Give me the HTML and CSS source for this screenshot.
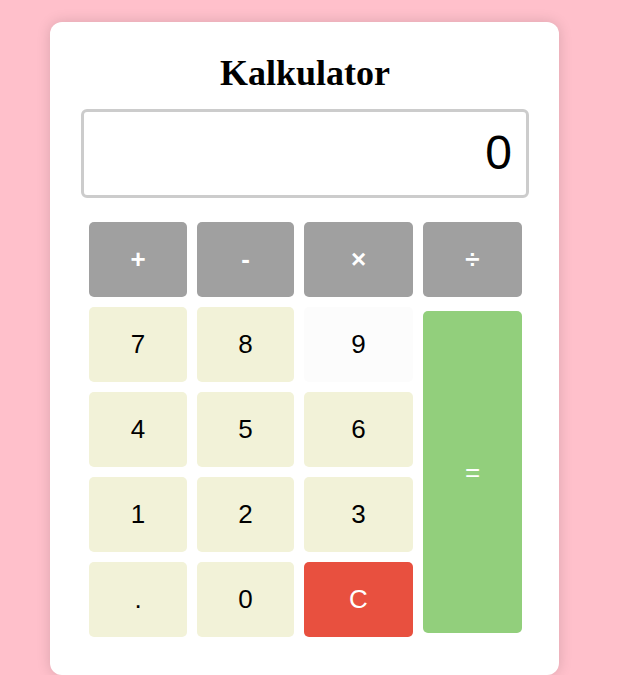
FILE: index.html
```html
<!DOCTYPE html>
<html lang="pl">
<head>
<meta charset="utf-8">
<title>Kalkulator</title>
<link rel="stylesheet" href="styles.css">
</head>
<body>
<div class="page">
  <div class="card">
    <h1 class="title">Kalkulator</h1>
    <div class="display">0</div>
    <div class="keys">
      <button class="key op">+</button>
      <button class="key op">-</button>
      <button class="key op">×</button>
      <button class="key op">÷</button>
      <button class="key num">7</button>
      <button class="key num">8</button>
      <button class="key num hover">9</button>
      <button class="key eq">=</button>
      <button class="key num">4</button>
      <button class="key num">5</button>
      <button class="key num">6</button>
      <button class="key num">1</button>
      <button class="key num">2</button>
      <button class="key num">3</button>
      <button class="key num">.</button>
      <button class="key num">0</button>
      <button class="key clear">C</button>
    </div>
  </div>
</div>
</body>
</html>
```
FILE: styles.css
```css
html, body {
  margin: 0;
  padding: 0;
  background: #ffc0cb;
  overflow: hidden;
}
.page {
  padding: 22px 0 0 50px;
}
.card {
  width: 509px;
  height: 653px;
  box-sizing: border-box;
  background: #ffffff;
  border-radius: 12px;
  box-shadow: 0 0 14px rgba(0, 0, 0, 0.15);
  padding: 31px 30px 0 31px;
}
.title {
  margin: 0;
  font-family: "Liberation Serif", "Times New Roman", serif;
  font-size: 36px;
  font-weight: bold;
  line-height: 41px;
  text-align: center;
  color: #000;
}
.display {
  margin-top: 15px;
  height: 89px;
  box-sizing: border-box;
  border: 3px solid #cccccc;
  border-radius: 6px;
  display: flex;
  align-items: center;
  justify-content: flex-end;
  padding: 0 14px 2px 10px;
  font-family: "Liberation Sans", Arial, sans-serif;
  font-size: 48px;
  color: #000;
}
.keys {
  margin: 24px 0 0 8px;
  display: grid;
  grid-template-columns: 98px 97px 109px 99px;
  grid-auto-rows: 75px;
  column-gap: 10px;
  row-gap: 10px;
}
.key {
  border: none;
  border-radius: 5px;
  margin: 0;
  padding: 0;
  font-family: "Liberation Sans", Arial, sans-serif;
  font-size: 26px;
  color: #000;
}
.op {
  background: #a0a0a0;
  color: #fff;
  font-weight: bold;
}
.num {
  background: #f2f2d8;
}
.num.hover {
  background: #fcfcfc;
}
.eq {
  grid-column: 4;
  grid-row: 2 / span 4;
  margin: 4px 0;
  background: #92cf7c;
  color: #fff;
}
.clear {
  background: #e8503f;
  color: #fff;
}
```
